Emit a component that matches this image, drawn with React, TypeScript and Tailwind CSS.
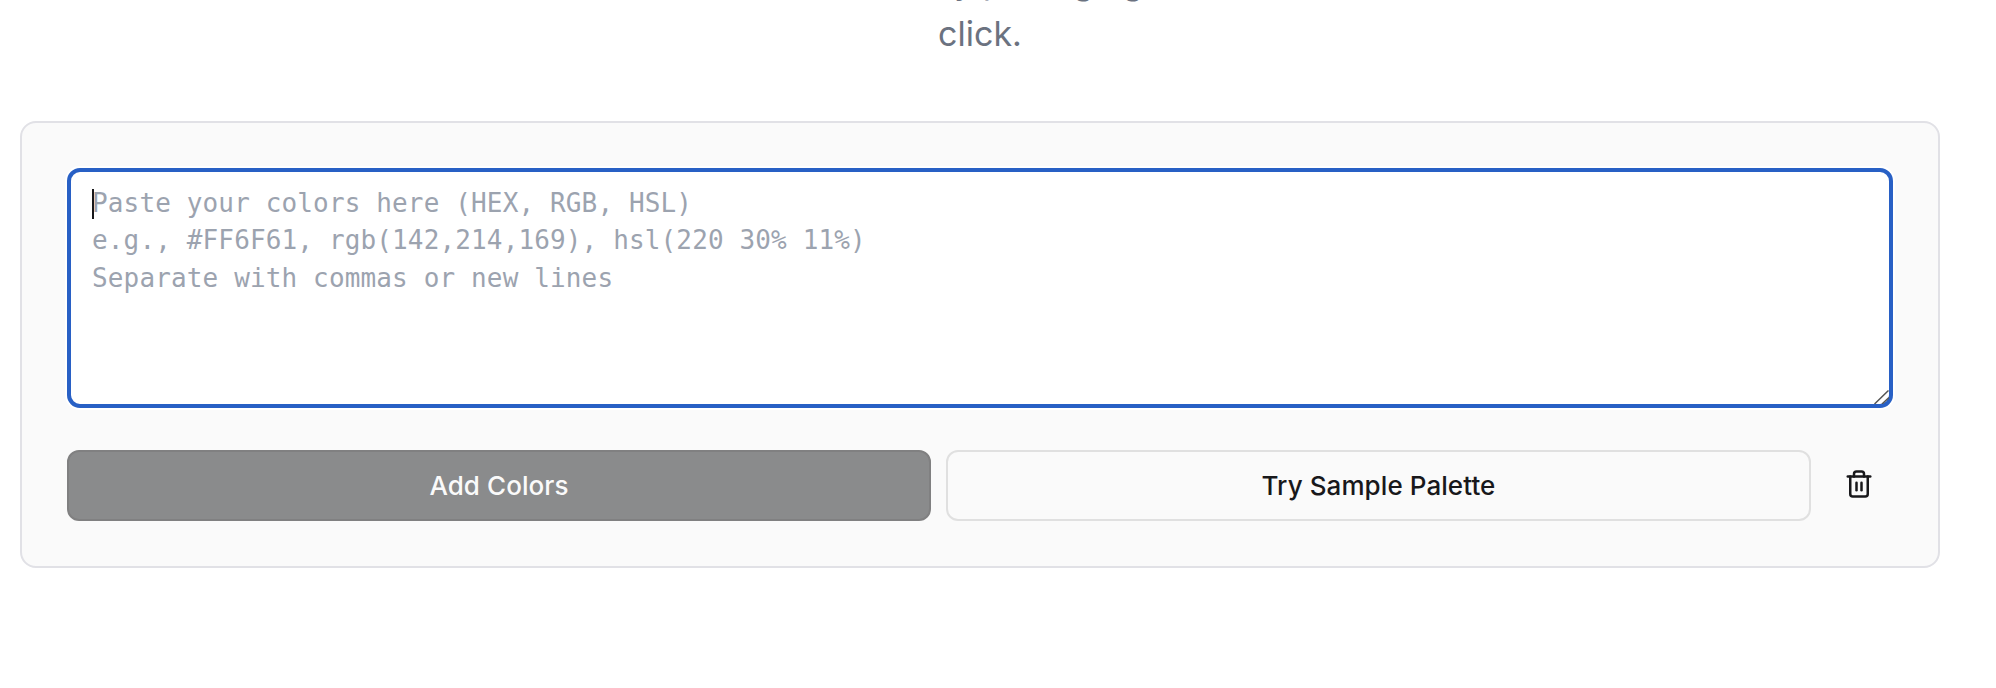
import { Trash2 } from "lucide-react";

export default function App() {
  return (
    <main className="h-[688px] w-full overflow-hidden bg-white font-['Inter',sans-serif] text-[#18181b]">
      <div className="flex h-[121px] w-[1960px] flex-col items-center text-[34px] leading-[48px] text-[#6b7280]">
        <p className="-mt-[42px] self-start pl-[934px]">by pairing again</p>
        <p className="mt-1">click.</p>
      </div>
      <section className="ml-5 flex h-[447px] w-[1920px] flex-col gap-[42px] rounded-2xl border-2 border-[#e1e1e6] bg-[#fafafa] px-[45px] pt-[45px]">
        <div className="relative">
          <textarea
            className="block h-[240px] w-full resize-none rounded-[13px] border-4 border-[#2860c5] bg-white px-[21px] py-[13px] font-['DejaVu_Sans_Mono',monospace] text-[26px] leading-[37.3px] tracking-[0.14px] outline-none ring-2 ring-white placeholder:text-[#9ca3af]"
            placeholder={"Paste your colors here (HEX, RGB, HSL)\ne.g., #FF6F61, rgb(142,214,169), hsl(220 30% 11%)\nSeparate with commas or new lines"}
          />
          <span className="absolute left-[25px] top-[21px] h-[30px] w-[2px] bg-[#18181b]" />
          <svg className="absolute bottom-[4px] right-[4px] h-[14px] w-[15px]" viewBox="0 0 15 14" fill="none" stroke="#555" strokeWidth="1.5">
            <path d="M0.5 14 14.5 0.5M8 14 15 7.5" />
          </svg>
        </div>
        <div className="flex h-[71px] text-[26px] font-medium tracking-[0.08px]">
          <button className="w-[864px] rounded-xl border-2 border-[#808081] bg-[#8a8b8c] text-[#fafafa]">Add Colors</button>
          <button className="ml-[15px] w-[865px] rounded-xl border-2 border-[#e0e0e0] bg-[#fafafa]">Try Sample Palette</button>
          <button aria-label="Clear colors" className="ml-[15px] flex w-[65px] items-center justify-center pb-[3px]">
            <Trash2 size={30} strokeWidth={2} />
          </button>
        </div>
      </section>
    </main>
  );
}
